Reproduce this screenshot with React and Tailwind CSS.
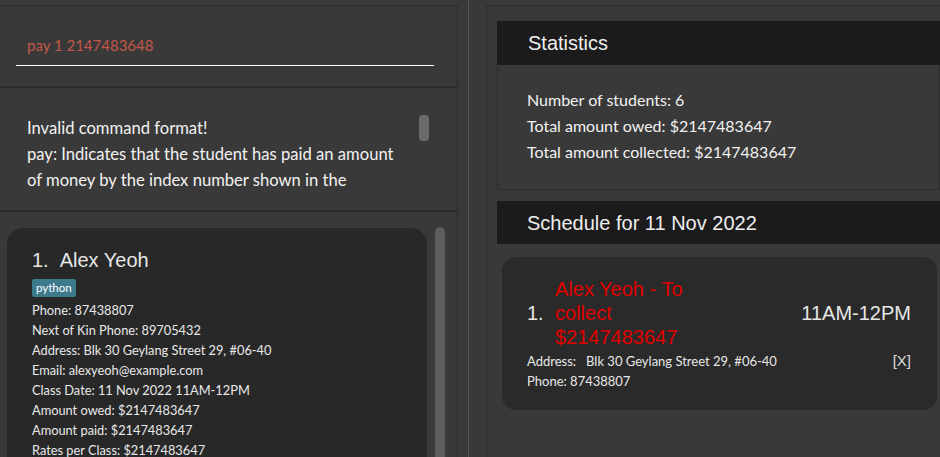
import React from "react";

const ui = { fontFamily: "Lato, 'Noto Sans', sans-serif" };
const arial = { fontFamily: "'Liberation Sans', Arial, sans-serif" };

const resultLines = [
  "Invalid command format!",
  "pay: Indicates that the student has paid an amount",
  "of money by the index number shown in the",
];

const details = [
  "Phone: 87438807",
  "Next of Kin Phone: 89705432",
  "Address: Blk 30 Geylang Street 29, #06-40",
  "Email: alexyeoh@example.com",
  "Class Date: 11 Nov 2022 11AM-12PM",
  "Amount owed: $2147483647",
  "Amount paid: $2147483647",
  "Rates per Class: $2147483647",
];

const stats = [
  "Number of students: 6",
  "Total amount owed: $2147483647",
  "Total amount collected: $2147483647",
];

const StudentCard = () => (
  <div className="w-[420px] shrink-0 rounded-[16px] bg-[#282828] pl-[25px] pt-[20px] pb-[20px]">
    <div className="flex text-[20px] leading-[24px] text-[#e6e6e6]" style={arial}>
      <span>1.</span>
      <span className="ml-[11px]">Alex Yeoh</span>
    </div>
    <div className="mt-[7px] flex">
      <span className="flex h-[18px] items-center rounded-[2px] bg-[#3e7a8e] px-[4px] text-[11.5px] text-white" style={ui}>
        python
      </span>
    </div>
    <div className="mt-[3px] text-[12.8px] leading-[20px] text-[#e8e8e8]" style={ui}>
      {details.map((d) => (
        <div key={d} className="whitespace-nowrap">{d}</div>
      ))}
    </div>
  </div>
);

const ScheduleCard = () => (
  <div className="ml-[5px] mt-[13px] w-[435px] rounded-[14px] bg-[#2a2a2a] pb-[19px] pl-[25px] pr-[26px] pt-[20px]">
    <div className="flex items-center text-[20px] leading-[24px]" style={arial}>
      <span className="w-[28px] text-[#e6e6e6]">1.</span>
      <span className="w-[150px] text-[#e00000]">Alex Yeoh - To collect $2147483647</span>
      <span className="ml-auto text-[#e6e6e6]">11AM-12PM</span>
    </div>
    <div className="mt-[2px] flex items-center text-[13px] leading-[20px] text-[#e8e8e8]" style={ui}>
      <span>Address:</span>
      <span className="ml-[10px]">Blk 30 Geylang Street 29, #06-40</span>
      <span className="ml-auto text-[15px] text-[#dddddd]" style={arial}>[X]</span>
    </div>
    <div className="text-[13px] leading-[20px] text-[#e8e8e8]" style={ui}>Phone: 87438807</div>
  </div>
);

export default function App() {
  return (
    <div className="flex h-[457px] w-[940px] overflow-hidden bg-[#393939] pt-[5px]">
      {/* left column */}
      <div className="flex w-[458px] shrink-0 flex-col border-r border-t border-[#2c2c2c]">
        <div className="h-[82px] shrink-0 border-b-2 border-[#2c2c2c]">
          <div
            className="ml-[16px] mr-[23px] mt-[29px] border-b border-white pb-[10px] pl-[11px] text-[15px] leading-[20px] text-[#c4574a]"
            style={ui}
          >
            pay 1 2147483648
          </div>
        </div>
        <div className="flex h-[124px] shrink-0 items-start border-b-2 border-[#2c2c2c] pt-[27px]">
          <div className="flex-1 pl-[27px] text-[16.6px] leading-[26px] text-[#f2f2f2]" style={ui}>
            {resultLines.map((l) => (
              <div key={l} className="whitespace-nowrap">{l}</div>
            ))}
          </div>
          <div className="mr-[28px] h-[26px] w-[10px] rounded-[4px] bg-[#6a6a6a]" />
        </div>
        <div className="flex min-h-0 flex-1 items-start">
          <div className="ml-[7px] mt-[16px]">
            <StudentCard />
          </div>
          <div className="ml-[8px] mt-[15px] h-[260px] w-[10px] rounded-[5px] bg-[#5e5e5e]" />
        </div>
      </div>

      {/* splitter */}
      <div className="w-[28px] shrink-0">
        <div className="-mt-[5px] ml-[10px] h-[462px] w-px bg-[#555555]" />
      </div>

      {/* right column */}
      <div className="flex-1 border-l border-t border-[#2c2c2c] pl-[10px] pt-[15px]">
        <div className="flex h-[44px] items-center bg-[#1b1b1b] pl-[31px] text-[20px] text-[#eeeeee]" style={arial}>
          Statistics
        </div>
        <div className="h-[125px] border border-t-0 border-[#2e2e2e] pl-[29px] pt-[22px] text-[16px] leading-[26px] text-[#f2f2f2]" style={ui}>
          {stats.map((s) => (
            <div key={s} className="whitespace-nowrap">{s}</div>
          ))}
        </div>
        <div className="mt-[11px] flex h-[43px] items-center bg-[#1b1b1b] pl-[30px] text-[20px] text-[#eeeeee]" style={arial}>
          Schedule for 11 Nov 2022
        </div>
        <ScheduleCard />
      </div>
    </div>
  );
}
